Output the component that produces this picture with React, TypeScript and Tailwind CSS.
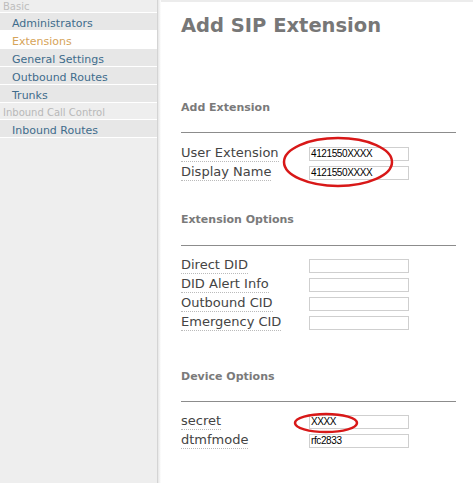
import React from "react";

const sans = { fontFamily: '"DejaVu Sans", sans-serif' };
const arial = { fontFamily: '"Liberation Sans", Arial, sans-serif' };

function NavItem({ label, active }: { label: string; active?: boolean }) {
  return (
    <div
      className={
        "h-[18px] flex items-center pl-[12px] pt-[4px] text-[11px] leading-[13px] border-b border-white " +
        (active ? "bg-white text-[#d6a45a]" : "bg-[#e7e7e7] text-[#3f6c8c]")
      }
    >
      {label}
    </div>
  );
}

function GroupHead({ label }: { label: string }) {
  return (
    <div className="h-[17px] flex items-center pl-[3px] pt-[3px] text-[10px] leading-[12px] text-[#b8b8b8] border-b border-white">
      {label}
    </div>
  );
}

function Row({ label, value }: { label: string; value?: string }) {
  return (
    <div className="h-[19px] flex items-center">
      <div className="w-[128px] flex">
        <span className="text-[13px] leading-[16px] text-[#444] border-b border-dotted border-[#bbb]">
          {label}
        </span>
      </div>
      <div
        className="w-[100px] h-[14px] border border-[#cfcfcf] bg-white flex items-center pl-[1px] text-[10px] text-black tracking-[-0.4px]"
        style={arial}
      >
        {value}
      </div>
    </div>
  );
}

function SectionTitle({ children, mt }: { children: React.ReactNode; mt: string }) {
  return (
    <div className={"h-[14px] flex items-center text-[11px] font-bold text-[#7a7a7a] " + mt}>
      {children}
    </div>
  );
}

export default function App() {
  return (
    <div className="w-[473px] h-[483px] flex bg-white overflow-hidden" style={sans}>
      <div className="w-[157px] bg-[#eeeeee] flex flex-col">
        <div className="h-[13px] flex items-center pl-[3px] pt-[1px] text-[10px] leading-[12px] text-[#bdbdbd] border-b border-white">
          Basic
        </div>
        <NavItem label="Administrators" />
        <NavItem label="Extensions" active />
        <NavItem label="General Settings" />
        <NavItem label="Outbound Routes" />
        <NavItem label="Trunks" />
        <GroupHead label="Inbound Call Control" />
        <NavItem label="Inbound Routes" />
      </div>
      <div className="w-[1px] bg-[#d4d4d4]" />
      <div className="w-[3px] bg-gradient-to-r from-[#e6e6e6] to-white" />
      <div className="relative flex-1 flex flex-col pl-[20px] pr-[17px] border-t-[2px] border-[#ececec]">
        <div className="mt-[11px] h-[25px] flex items-center text-[19.5px] font-bold text-[#777]">
          Add SIP Extension
        </div>
        <SectionTitle mt="mt-[63px]">Add Extension</SectionTitle>
        <div className="mt-[17px] h-[1px] bg-[#8c8c8c]" />
        <div className="mt-[11px]">
          <Row label="User Extension" value="4121550XXXX" />
          <Row label="Display Name" value="4121550XXXX" />
        </div>
        <SectionTitle mt="mt-[31px]">Extension Options</SectionTitle>
        <div className="mt-[18px] h-[1px] bg-[#8c8c8c]" />
        <div className="mt-[10px]">
          <Row label="Direct DID" />
          <Row label="DID Alert Info" />
          <Row label="Outbound CID" />
          <Row label="Emergency CID" />
        </div>
        <SectionTitle mt="mt-[38px]">Device Options</SectionTitle>
        <div className="mt-[17px] h-[1px] bg-[#8c8c8c]" />
        <div className="mt-[10px]">
          <Row label="secret" value="XXXX" />
          <Row label="dtmfmode" value="rfc2833" />
        </div>

        <svg className="absolute left-0 top-0 pointer-events-none" width="313" height="483">
          <ellipse cx="177" cy="160" rx="54" ry="24" fill="none" stroke="#d81818" strokeWidth="2.5" />
          <ellipse cx="165" cy="421" rx="31" ry="9" fill="none" stroke="#d81818" strokeWidth="2.5" />
        </svg>
      </div>
    </div>
  );
}
